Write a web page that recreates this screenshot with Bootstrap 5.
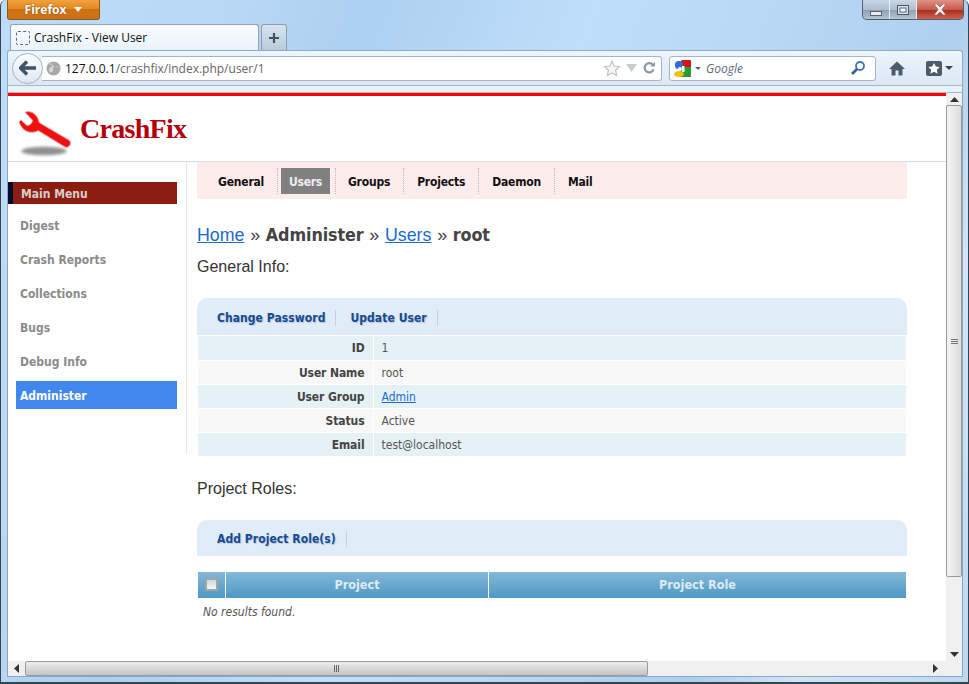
<!DOCTYPE html>
<html lang="en"><head><meta charset="utf-8"><title>CrashFix - View User</title>
<link href="https://cdn.jsdelivr.net/npm/bootstrap@5.3.0/dist/css/bootstrap.min.css" rel="stylesheet">
<style>
html,body{height:684px;overflow:hidden}
body{background:#fff;font-family:"DejaVu Sans Condensed","DejaVu Sans",sans-serif;font-size:12px;color:#444}
.win{width:969px;height:684px;padding:0 5px 5px 6px;border:1px solid #39434e;border-top:0;border-radius:6px 6px 0 0;
 background:linear-gradient(112deg,#bcdcf9 0,#b9d8f6 18%,#acd0f0 30%,#bfdefb 48%,#b8d8f5 62%,#aecfee 78%,#d2e4f6 86%,#bcd9f2 100%);border-bottom-width:2px}
.win>*{flex:none}
.ttl{height:24px;margin-right:-1px}
.ffbtn{width:93px;height:20px;border:1px solid #8a5a1c;border-top:0;border-radius:0 0 3px 3px;background:linear-gradient(#f0a23f,#e58a22 45%,#d2700f 50%,#c9741c);color:#fff;font:700 12px "Open Sans",sans-serif;text-shadow:0 0 2px #8a4a08}
.caretw{width:0;height:0;border:4px solid transparent;border-top:5px solid #fff;border-bottom:0}
.ctl{height:20px;width:102px;border:1px solid #515e6c;border-top:0;border-radius:0 0 5px 5px;overflow:hidden;background:linear-gradient(#c9d7e5,#aebfd0 50%,#8d9fb1 52%,#b6c4d1)}
.ctlb{width:27px;border-right:1px solid #e6eef5}
.ctlx{flex:1;background:linear-gradient(#dd9387,#c9594b 50%,#a92d1e 55%,#d0614e);color:#fff}
.tabs{height:26px;padding-left:3px;gap:2px}
.tabo{width:249px;background:linear-gradient(#fbfdff,#e9f2fb);border:1px solid #8ea3b8;border-bottom:0;border-radius:3px 3px 0 0;padding-left:5px;gap:4px;color:#111;font:12px "Open Sans",sans-serif}
.favi{width:14px;height:14px;border:1px dashed #667;border-radius:2px}
.tabn{width:26px;background:linear-gradient(#d8e4ef,#b9cbdc);border:1px solid #8a9db1;border-bottom:0;border-radius:3px 3px 0 0}
.tbar{height:36px;background:linear-gradient(#edf5fd,#dbe8f5);border:1px solid #93a9be;border-bottom-color:#a6b7c7;border-radius:3px 3px 0 0;padding-left:4px}
.tbar>*{flex:none}
.back{width:31px;height:31px;border-radius:50%;background:linear-gradient(#fbfdff,#dfe8f2);border:1px solid #a3b3c4;z-index:1}
.url{width:620px;height:25px;background:#fff;border:1px solid #a5b5c6;border-left:0;border-radius:0 3px 3px 0;margin-left:-1px;padding:0 6px 0 4px;font:12px "Open Sans",sans-serif;color:#666}
.url b{font-weight:400;color:#111}
.tri{margin:0 6px 0 5px}
.srch{width:207px;height:25px;margin-left:7px;background:#fff;border:1px solid #a5b5c6;border-radius:3px;padding:0 10px 0 4px;font:italic 12px "Open Sans",sans-serif;color:#5d6b7a}
.scar{width:0;height:0;border:3px solid transparent;border-top:3px solid #56626e;border-bottom:0;margin-left:4px}
.gtxt{margin-left:5px;flex:1}
.tool1{width:42px}.tool2{width:42px;gap:3px}
.tcaret{width:0;height:0;border:4px solid transparent;border-top:4px solid #3a4652;border-bottom:0}
.gap6{height:7px;background:#e9f1f9;border-left:1px solid #93a9be;border-right:1px solid #93a9be;border-bottom:1px solid #a9b7c5}
.pagebox{height:568px;border-left:1px solid #8fa5bb;border-right:1px solid #8fa5bb;background:#fff}
.pg{width:938px;overflow:hidden;flex:none}
.redl{height:3px;background:#f00}
.hd{height:66px;border-bottom:1px solid #d6dfe8;padding-left:2px}
.logo{margin-top:3px;flex:none}
.brand{font:700 28px "Liberation Serif",serif;color:#b4000a;letter-spacing:-.7px}
.side{width:179px;height:292px;border-right:1px solid #e4e9ee;padding-top:20px;flex:none}
.mmh{height:22px;width:169px;background:#8b1e10;border-left:5px solid #050a2c;color:#d9cfcb;font-weight:700;font-size:12px;padding:1px 0 0 8px;margin-bottom:7px}
.mi{display:flex;align-items:center;height:28px;width:161px;margin:0 0 6px 8px;padding:1px 0 0 4px;color:#8a8a8a;font-weight:700;font-size:12px;text-decoration:none}
.mi.on{background:#4287ee;color:#fff}
.mainc{width:710px;margin-left:10px;flex:none}
.subm{height:37px;background:#fdecec;padding:6px 0 5px 8px}
.sm{display:flex;align-items:center;height:26px;padding:1px 13px 0;color:#111;font-weight:700;font-size:12px;letter-spacing:-.2px;text-decoration:none;border-right:1px dotted #c4b4b4}
.sm.on{background:#808080;color:#eee;padding:1px 8px 0;margin:0 5px 0 3px;border:0;letter-spacing:-.3px}
.sm.aft{border-left:1px dotted #c4b4b4;padding-left:12px}
.crumb{font:17.8px "Liberation Sans",sans-serif;color:#444;margin:25px 0 0;line-height:22px;word-spacing:.8px}
.crumb a{color:#1a6ad2}
.crumb b{font-family:"DejaVu Sans Condensed",sans-serif;letter-spacing:-.1px}
.sec{font:16px "Liberation Sans",sans-serif;color:#333;line-height:20px}
.s1{margin:11px 0 21px}.s2{margin:22px 0 21px}
.acts{height:37px;background:#e0ecf8;border-radius:10px 10px 0 0;padding:2px 0 0 20px}
.acts2{height:36px;margin-bottom:16px}
.ac{display:flex;align-items:center;height:16px;padding:0 10px 0 0;border-right:1px solid #c8d2dc;color:#174a94;font-weight:700;font-size:12px;letter-spacing:.06px;text-decoration:none;text-shadow:1px 1px 1px #b6c6d8}
.ac+.ac{margin-left:14px}
.table.dv{margin:1px 0 0 1px;width:709px;font-size:12px;--bs-table-bg:transparent}
.dv td,.dv th{height:24px;padding:1px 8px 0;border:0;border-right:1px solid #fff;border-bottom:1px solid #fff;vertical-align:middle;color:#555}
.dv th{width:175px;text-align:right;font-weight:700;color:#444;font-size:12px;letter-spacing:-.1px}
.dv tr.o td,.dv tr.o th{background:#e5f1f4}
.dv tr.e td,.dv tr.e th{background:#f8f8f8}
.dv a{color:#1a6ad2}
.gh{margin-left:1px;width:708px;height:26px}
.gc{display:flex;align-items:center;justify-content:center;background:linear-gradient(#83b8d8,#4e99c5);color:#dfeaf2;font-weight:700;font-size:12.5px;margin-right:1px;padding-top:1px}
.g1{width:27px;padding-top:0}.g2{width:262px}.g3{flex:1;margin-right:0}
.cbx{width:13px;height:13px;border:2px solid #a4a4a4;background:linear-gradient(#cfd5da,#f4f6f8)}
.nores{font:italic 12px "DejaVu Sans Condensed",sans-serif;color:#555;padding:7px 0 0 6px}
.vs{width:16px;background:#f0f0f0;flex:none}
.sbarr{height:12px;flex:none}
.vth{height:472px;width:16px;flex:none;border:1px solid #9a9a9a;border-radius:2px;background:linear-gradient(90deg,#f4f4f4,#dcdcdc)}
.gr3{width:7px;height:1px;border-top:1px solid #777;box-shadow:0 2px 0 #777,0 -2px 0 #777}
.hs{height:16px;background:#f0f0f0;border-left:1px solid #8fa5bb;border-right:1px solid #8fa5bb;border-bottom:1px solid #8fa5bb}
.hsa{width:17px;flex:none}
.hth{width:623px;flex:none;height:15px;border:1px solid #9a9a9a;border-radius:2px;background:linear-gradient(#ededed,#c4c4c4)}
.gr4{width:1px;height:7px;border-left:1px solid #666;box-shadow:2px 0 0 #666,-2px 0 0 #666}
.hsr{width:298px;flex:none}.corner{flex:1}
</style></head><body>
<div class="win d-flex flex-column">
 <div class="ttl d-flex justify-content-between">
  <div class="ffbtn d-flex align-items-center justify-content-center gap-2">Firefox<span class="caretw"></span></div>
  <div class="ctl d-flex">
   <div class="ctlb d-flex align-items-center justify-content-center"><svg class="mt-2" width="12" height="6"><rect x=".5" y=".5" width="11" height="4" fill="#e8eef4" stroke="#59636e"/></svg></div>
   <div class="ctlb d-flex align-items-center justify-content-center"><svg width="12" height="10"><rect x=".5" y=".5" width="11" height="9" fill="#dbe4ec" stroke="#4a5561"/><rect x="3" y="3" width="6" height="4" fill="#fff" stroke="#59636e"/></svg></div>
   <div class="ctlx d-flex align-items-center justify-content-center"><svg width="14" height="11"><path d="M1 0h3l3 3 3-3h3L9 5.500 13 11h-3L7 8l-3 3H1l4-5.500z" fill="#f5f0ef" stroke="#7a3a30" stroke-width=".5"/></svg></div>
  </div>
 </div>
 <div class="tabs d-flex">
  <div class="tabo d-flex align-items-center"><span class="favi"></span>CrashFix - View User</div>
  <div class="tabn d-flex align-items-center justify-content-center"><svg width="12" height="12"><path d="M6 1v10M1 6h10" stroke="#44525f" stroke-width="2.200"/></svg></div>
 </div>
 <div class="tbar d-flex align-items-center">
  <div class="back d-flex align-items-center justify-content-center"><svg width="18" height="16"><path d="M8 1.500 1.500 8 8 14.500M2 8h15" fill="none" stroke="#3f5266" stroke-width="3.400"/></svg></div>
  <div class="url d-flex align-items-center">
   <svg class="me-1" width="15" height="15"><circle cx="7.500" cy="7.500" r="7" fill="#a8a8a8"/><path d="M3 3c3-1 4 0 3 2S3 6 3 9s3 3 4 1-1-3 1-4 4-1 5 1" fill="#d6d6d6"/></svg>
   <span class="flex-grow-1"><b>127.0.0.1</b>/crashfix/index.php/user/1</span>
   <svg width="18" height="17" viewBox="0 0 20 19"><path d="M10 1.500l2.500 5.300 5.800.7-4.300 4 1.100 5.700L10 14.400l-5.100 2.800L6 11.500l-4.300-4 5.800-.7z" fill="#f6f6f6" stroke="#c2c2c2" stroke-width="1.300"/></svg>
   <svg class="tri" width="11" height="8"><path d="M0 0h11L5.500 8z" fill="#c6ccd2"/></svg>
   <svg width="12" height="12" viewBox="0 0 13 13"><path d="M11 3.500A5 5 0 1 0 11.500 8" fill="none" stroke="#8b98a5" stroke-width="2.400"/><path d="M8 5h5V0z" fill="#8b98a5"/></svg>
  </div>
  <div class="srch d-flex align-items-center">
   <svg width="17" height="17"><rect x="7" y="0" width="10" height="8" rx="1" fill="#d41515"/><rect x="6" y="7" width="11" height="10" rx="1" fill="#2a9a38"/><rect x="1" y="1" width="8" height="8" rx="3.500" fill="#2f6fd8"/><ellipse cx="5" cy="14" rx="5" ry="3" fill="#f4c20d"/><circle cx="6" cy="9" r="2" fill="#fff"/><rect x="8" y="6" width="2.500" height="6" fill="#fff"/></svg>
   <span class="scar"></span>
   <span class="gtxt">Google</span>
   <svg width="14" height="14"><circle cx="9" cy="5" r="4" fill="#fff" stroke="#3a74b4" stroke-width="1.800"/><path d="M6 8 1 13" stroke="#2e6099" stroke-width="2.600"/></svg>
  </div>
  <div class="tool1 d-flex justify-content-center align-items-center"><svg width="16" height="15"><path d="M8 .5 0 8h2.500v6.500h4V9.500h3v5h4V8H16z" fill="#4c5c6b"/></svg></div>
  <div class="tool2 d-flex justify-content-center align-items-center"><svg width="16" height="15"><rect width="16" height="15" rx="2" fill="#4c5a6a"/><path d="M8 2l1.800 3.600 3.900.5-2.900 2.700.8 3.900L8 10.800l-3.600 1.900.8-3.900L2.300 6.100l3.900-.5z" fill="#fff"/></svg><span class="tcaret"></span></div>
 </div>
 <div class="gap6"></div>
 <div class="pagebox d-flex">
  <div class="pg">
   <div class="redl"></div>
   <div class="hd d-flex align-items-center">
    <svg class="logo" width="70" height="60" viewBox="0 0 210 180"><defs><filter id="bl" x="-20%" y="-60%" width="140%" height="220%"><feGaussianBlur stdDeviation="4"/></filter></defs><ellipse cx="102" cy="153" rx="68" ry="13" fill="#8f8f8f" filter="url(#bl)"/><path d="M45 37C60 30 82 40 88 68L178 121C186 130 178 146 165 141L85 92C62 104 36 94 27 66L33 60 50 76C58 78 68 70 67 60z" fill="#f01010" stroke="#e5a5a5" stroke-width="3"/></svg>
    <span class="brand">CrashFix</span>
   </div>
   <div class="d-flex">
    <div class="side">
     <div class="mmh d-flex align-items-center">Main Menu</div>
     <a class="mi" href="#">Digest</a><a class="mi" href="#">Crash Reports</a><a class="mi" href="#">Collections</a><a class="mi" href="#">Bugs</a><a class="mi" href="#">Debug Info</a><a class="mi on" href="#">Administer</a>
    </div>
    <div class="mainc">
     <div class="subm d-flex"><a class="sm" href="#">General</a><a class="sm on" href="#">Users</a><a class="sm aft" href="#">Groups</a><a class="sm" href="#">Projects</a><a class="sm" href="#">Daemon</a><a class="sm border-0" href="#">Mail</a></div>
     <div class="crumb"><a href="#">Home</a> » <b>Administer</b> » <a href="#">Users</a> » <b>root</b></div>
     <div class="sec s1">General Info:</div>
     <div class="acts d-flex align-items-center"><a class="ac" href="#">Change Password</a><a class="ac" href="#">Update User</a></div>
     <table class="table dv"><tbody>
      <tr class="o"><th>ID</th><td>1</td></tr>
      <tr class="e"><th>User Name</th><td>root</td></tr>
      <tr class="o"><th>User Group</th><td><a href="#">Admin</a></td></tr>
      <tr class="e"><th>Status</th><td>Active</td></tr>
      <tr class="o"><th>Email</th><td>test@localhost</td></tr>
     </tbody></table>
     <div class="sec s2">Project Roles:</div>
     <div class="acts acts2 d-flex align-items-center"><a class="ac" href="#">Add Project Role(s)</a></div>
     <div class="gh d-flex"><div class="gc g1"><span class="cbx"></span></div><div class="gc g2">Project</div><div class="gc g3">Project Role</div></div>
     <div class="nores">No results found.</div>
    </div>
   </div>
  </div>
  <div class="vs d-flex flex-column align-items-center">
   <div class="sbarr d-flex align-items-center"><svg width="9" height="5"><path d="M0 5h9L4.500 0z" fill="#333"/></svg></div>
   <div class="vth d-flex align-items-center justify-content-center"><span class="gr3"></span></div>
   <div class="d-flex align-items-end pb-1 flex-grow-1"><svg width="9" height="5"><path d="M0 0h9L4.500 5z" fill="#333"/></svg></div>
  </div>
 </div>
 <div class="hs d-flex">
  <div class="hsa d-flex align-items-center justify-content-center"><svg width="5" height="9"><path d="M5 0v9L0 4.500z" fill="#333"/></svg></div>
  <div class="hth d-flex align-items-center justify-content-center"><span class="gr4"></span></div>
  <div class="hsr d-flex align-items-center justify-content-end pe-2"><svg width="5" height="9"><path d="M0 0v9l5-4.500z" fill="#333"/></svg></div>
  <div class="corner"></div>
 </div>
</div>
<script src="https://cdn.jsdelivr.net/npm/bootstrap@5.3.0/dist/js/bootstrap.bundle.min.js"></script>
</body></html>
